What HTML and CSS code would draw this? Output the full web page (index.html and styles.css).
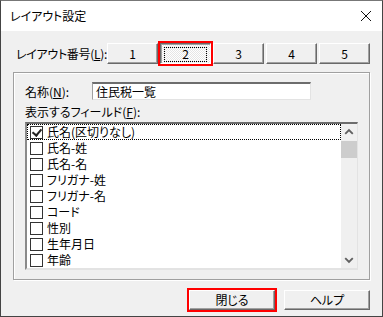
FILE: index.html
```html
<!DOCTYPE html>
<html lang="ja">

<head>
  <meta charset="UTF-8">
  <meta name="viewport" content="width=device-width, initial-scale=1.0">
  <title>レイアウト設定</title>
  <link rel="stylesheet" href="styles.css">
</head>

<body>
  <div class="window">
    <div class="titlebar">
      <span class="title">レイアウト設定</span>
      <svg class="close" width="12" height="12" viewBox="0 0 12 12">
        <path d="M1 1 L11 11 M11 1 L1 11" stroke="#111" stroke-width="1" fill="none" />
      </svg>
    </div>

    <div class="content">
      <!-- layout number selector -->
      <div class="layout-row">
        <span class="layout-label">レイアウト番号(<u>L</u>):</span>
        <div class="num-buttons">
          <button class="btn num">1</button>
          <button class="btn num pressed highlight"><span class="focus">2</span></button>
          <button class="btn num">3</button>
          <button class="btn num">4</button>
          <button class="btn num">5</button>
        </div>
      </div>

      <div class="group">
        <div class="name-row">
          <span class="name-label">名称(<u>N</u>):</span>
          <div class="edit">住民税一覧</div>
        </div>

        <div class="field-label">表示するフィールド(<u>F</u>):</div>

        <div class="listbox">
          <ul class="items">
            <li class="item focused"><span class="check checked"></span>氏名(区切りなし)</li>
            <li class="item"><span class="check"></span>氏名-姓</li>
            <li class="item"><span class="check"></span>氏名-名</li>
            <li class="item"><span class="check"></span>フリガナ-姓</li>
            <li class="item"><span class="check"></span>フリガナ-名</li>
            <li class="item"><span class="check"></span>コード</li>
            <li class="item"><span class="check"></span>性別</li>
            <li class="item"><span class="check"></span>生年月日</li>
            <li class="item"><span class="check"></span>年齢</li>
          </ul>
          <div class="scrollbar">
            <svg class="arrow" width="17" height="17" viewBox="0 0 17 17">
              <path d="M4.5 10 L8.5 6 L12.5 10" stroke="#606060" stroke-width="2" fill="none" />
            </svg>
            <div class="thumb"></div>
            <div class="track"></div>
            <svg class="arrow" width="17" height="17" viewBox="0 0 17 17">
              <path d="M4.5 7 L8.5 11 L12.5 7" stroke="#606060" stroke-width="2" fill="none" />
            </svg>
          </div>
        </div>
      </div>

      <div class="footer">
        <button class="btn wide highlight">閉じる</button>
        <button class="btn wide">ヘルプ</button>
      </div>
    </div>
  </div>
</body>

</html>
```

FILE: styles.css
```css
* {
  box-sizing: border-box;
}

body {
  margin: 0;
  font-family: "Noto Sans CJK JP", "Noto Sans", sans-serif;
  font-size: 12px;
  font-feature-settings: "palt" 1;
  color: #000;
  white-space: nowrap;
}

u {
  text-decoration: underline;
  text-underline-offset: 1px;
}

.window {
  width: 383px;
  height: 317px;
  border: 1px solid #444;
  border-top-color: #777;
  background-color: #f0f0f0;
  display: flex;
  flex-direction: column;
}

.titlebar {
  height: 30px;
  background-color: #fff;
  display: flex;
  align-items: center;
  justify-content: space-between;
  padding: 0 10px 0 9px;
}

.title {
  font-size: 12px;
  line-height: 14px;
}

.content {
  padding: 12px 12px 0 12px;
}

.layout-row {
  display: flex;
  align-items: center;
  height: 21px;
}

.layout-label {
  margin-left: 3px;
  width: 91px;
  letter-spacing: -0.3px;
}

.num-buttons {
  display: flex;
  gap: 2px;
}

.btn {
  font-family: inherit;
  font-size: 12px;
  font-feature-settings: "palt" 1;
  color: #000;
  background-color: #f0f0f0;
  border: 1px solid;
  border-color: #fff #696969 #696969 #fff;
  box-shadow: inset -1px -1px 0 #a0a0a0;
  padding: 0;
  margin: 0;
  display: flex;
  align-items: center;
  justify-content: center;
  line-height: 14px;
}

.num {
  width: 51px;
  height: 21px;
}

.pressed {
  border-color: #696969 #fff #fff #696969;
  box-shadow: inset 1px 1px 0 #a0a0a0;
  background-color: #fff;
  background-image: repeating-conic-gradient(#e6e6e6 0 25%, #fff 0 50%);
  background-size: 2px 2px;
}

.highlight {
  outline: 2px solid #f00;
  outline-offset: 0;
}

.focus {
  display: flex;
  align-items: center;
  justify-content: center;
  width: 43px;
  height: 15px;
  border: 1px dotted #000;
  margin-top: 1px;
}

.group {
  margin-top: 8px;
  border: 1px solid #a0a0a0;
  box-shadow: inset 1px 1px 0 #fff, 1px 1px 0 #fff;
  padding: 9px 11px 9px 11px;
}

.name-row {
  display: flex;
  align-items: center;
  height: 18px;
}

.name-label {
  width: 67px;
}

.edit {
  width: 219px;
  height: 18px;
  background-color: #fff;
  border-top: 2px solid #6d6d6d;
  border-left: 1px solid #a0a0a0;
  border-right: 1px solid #e3e3e3;
  border-bottom: 1px solid #e3e3e3;
  padding: 0 0 0 3px;
  line-height: 15px;
}

.field-label {
  margin-top: 4px;
  height: 18px;
  line-height: 16px;
}

.listbox {
  height: 148px;
  width: 333px;
  background-color: #fff;
  border-top: 2px solid #6d6d6d;
  border-left: 2px solid #8a8a8a;
  border-right: 1px solid #e3e3e3;
  border-bottom: 2px solid #e3e3e3;
  display: flex;
}

.items {
  list-style: none;
  margin: 0;
  padding: 0;
  flex: 1;
}

.item {
  height: 16px;
  display: flex;
  align-items: center;
  padding-left: 2px;
  line-height: 14px;
  border: 1px solid transparent;
}

.item.focused {
  border: 1px dotted #000;
}

.check {
  width: 13px;
  height: 13px;
  border: 1px solid #333;
  background-color: #fff;
  margin-right: 4px;
  position: relative;
}

.check.checked::after {
  content: "";
  position: absolute;
  left: 3px;
  top: 0px;
  width: 4px;
  height: 7px;
  border-right: 2px solid #222;
  border-bottom: 2px solid #222;
  transform: rotate(40deg);
}

.scrollbar {
  width: 16px;
  background-color: #f0f0f0;
  display: flex;
  flex-direction: column;
}

.arrow {
  display: block;
  width: 16px;
  height: 17px;
}

.thumb {
  height: 17px;
  background-color: #cdcdcd;
}

.track {
  flex: 1;
}

.footer {
  display: flex;
  justify-content: flex-end;
  gap: 9px;
  margin-top: 10px;
}

.wide {
  width: 86px;
  height: 20px;
}
```
